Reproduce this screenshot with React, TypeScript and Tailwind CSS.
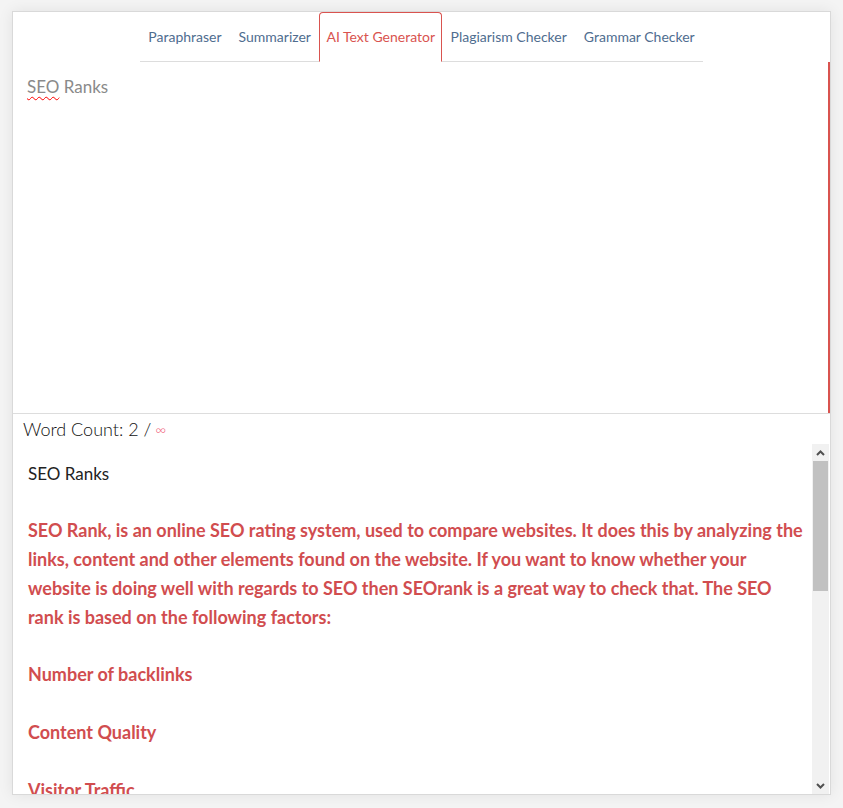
const tabs = ['Paraphraser', 'Summarizer', 'AI Text Generator', 'Plagiarism Checker', 'Grammar Checker']

function ScrollBar() {
  return (
    <div className="flex w-[17px] shrink-0 flex-col bg-[#f1f1f1]">
      <div className="flex h-[17px] items-center justify-center">
        <svg width="9" height="6" viewBox="0 0 9 6">
          <path d="M1 5 L4.5 1.5 L8 5" fill="none" stroke="#505050" strokeWidth="2" />
        </svg>
      </div>
      <div className="mx-[1px] h-[130px] bg-[#c1c1c1]" />
      <div className="flex-1" />
      <div className="flex h-[17px] items-center justify-center">
        <svg width="9" height="6" viewBox="0 0 9 6">
          <path d="M1 1 L4.5 4.5 L8 1" fill="none" stroke="#505050" strokeWidth="2" />
        </svg>
      </div>
    </div>
  )
}

export default function App() {
  return (
    <div className="min-h-[808px] bg-[#f4f4f4] pt-[11px] pl-[12px] font-['Lato','Open_Sans',sans-serif]">
      <div className="flex h-[784px] w-[819px] flex-col border border-[#d9d9d9] bg-white shadow-[0_0_14px_rgba(0,0,0,0.08)]">
        <div className="flex justify-center">
          <div className="flex h-[50px] border-b border-[#dddddd]">
            {tabs.map((t) => {
              const active = t === 'AI Text Generator'
              return (
                <div
                  key={t}
                  className={
                    active
                      ? 'relative -mb-px flex items-center rounded-t-[4px] border border-b-white border-[#d9534f] bg-white px-[6px] pb-px text-[14px] text-[#d9534f]'
                      : 'mx-px flex items-center border border-transparent px-[6.5px] pb-px text-[14px] text-[#4f6d8f]'
                  }
                >
                  {t}
                </div>
              )
            })}
          </div>
        </div>

        <div className="h-[351px] border-r-2 border-r-[#d9534f] px-[14px] pt-[12px] text-[17px] text-[#8a8a8a]">
          <span className="underline decoration-wavy decoration-[#ff0000] decoration-1 underline-offset-[3px]">SEO</span> Ranks
        </div>

        <div className="flex h-[31px] items-center border-t border-[#dddddd] pl-[10px] text-[18px] font-light text-[#111]">
          Word Count: 2 /<span className="ml-[4px] text-[15px] text-[#f0607a]">∞</span>
        </div>

        <div className="flex min-h-0 flex-1 pr-[1px]">
          <div className="min-w-0 flex-1 overflow-hidden pt-[15px] pl-[15px] pr-[2px] leading-[29px]">
            <div className="text-[17px] text-[#222]">SEO Ranks</div>
            <div className="h-[28px]" />
            <div className="text-[18px] font-bold text-[#d14d4f]">
              SEO Rank, is an online SEO rating system, used to compare websites. It does this by analyzing the links, content and other elements found on the website. If you want to know whether your website is doing well with regards to SEO then SEOrank is a great way to check that. The SEO rank is based on the following factors:
            </div>
            <div className="h-[28px]" />
            <div className="text-[18px] font-bold text-[#d14d4f]">Number of backlinks</div>
            <div className="h-[29px]" />
            <div className="text-[18px] font-bold text-[#d14d4f]">Content Quality</div>
            <div className="h-[29px]" />
            <div className="text-[18px] font-bold text-[#d14d4f]">Visitor Traffic</div>
          </div>
          <ScrollBar />
        </div>
      </div>
    </div>
  )
}
